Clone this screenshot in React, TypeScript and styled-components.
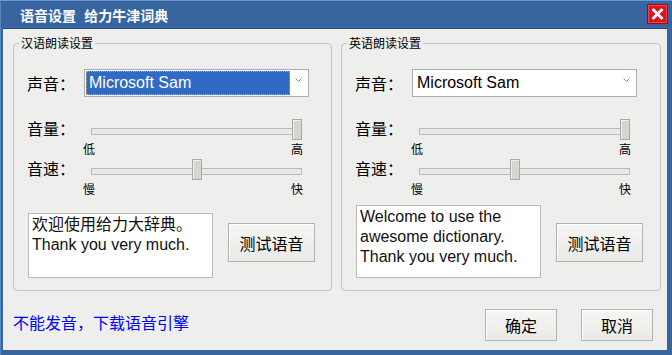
import React from 'react';
import styled, { createGlobalStyle } from 'styled-components';

const FONT = '"Liberation Sans", "Noto Sans CJK SC", sans-serif';

const GlobalStyle = createGlobalStyle`
  html, body {
    margin: 0;
    padding: 0;
    background: #ffffff;
  }
  body {
    font-family: ${FONT};
  }
  * {
    box-sizing: border-box;
  }
`;

interface VoiceGroupProps {
  title: string;
  highlighted?: boolean;
  speed: number;
  lines: string[];
  textHeight: number;
}

const Slider: React.FC<{ value: number }> = ({ value }) => (
  <Track>
    <Thumb $pos={value} />
  </Track>
);

const VoiceGroup: React.FC<VoiceGroupProps> = ({ title, highlighted, speed, lines, textHeight }) => (
  <Group>
    <Legend>{title}</Legend>
    <Row $height={28}>
      <Label>声音：</Label>
      <Select>
        <SelectValue $selected={highlighted}>Microsoft Sam</SelectValue>
        <Arrow>
          <svg width="7" height="4" viewBox="0 0 7 4">
            <polyline points="0.5,0.5 3.5,3.5 6.5,0.5" fill="none" stroke="#8a8a8a" strokeWidth="1" />
          </svg>
        </Arrow>
      </Select>
    </Row>
    <Row $height={21} $top={22}>
      <Label $lift>音量：</Label>
      <SliderBox>
        <Slider value={1} />
      </SliderBox>
    </Row>
    <Ticks>
      <span>低</span>
      <span>高</span>
    </Ticks>
    <Row $height={21} $top={3}>
      <Label $lift>音速：</Label>
      <SliderBox>
        <Slider value={speed} />
      </SliderBox>
    </Row>
    <Ticks>
      <span>慢</span>
      <span>快</span>
    </Ticks>
    <TestRow>
      <TextBox $height={textHeight}>
        {lines.map((l, i) => (
          <div key={i}>{l}</div>
        ))}
      </TextBox>
      <TestButton>测试语音</TestButton>
    </TestRow>
  </Group>
);

const App: React.FC = () => {
  return (
    <>
      <GlobalStyle />
      <Window>
        <TitleBar>
          <Title>语音设置 给力牛津词典</Title>
          <CloseButton>
            <svg width="13" height="12" viewBox="0 0 13 12">
              <line x1="1.5" y1="1" x2="11.5" y2="11" stroke="#fff" strokeWidth="2.8" />
              <line x1="11.5" y1="1" x2="1.5" y2="11" stroke="#fff" strokeWidth="2.8" />
            </svg>
          </CloseButton>
        </TitleBar>
        <Body>
          <Groups>
            <VoiceGroup
              title="汉语朗读设置"
              highlighted
              speed={0.5}
              textHeight={65}
              lines={['欢迎使用给力大辞典。', 'Thank you very much.']}
            />
            <VoiceGroup
              title="英语朗读设置"
              speed={0.455}
              textHeight={73}
              lines={['Welcome to use the', 'awesome dictionary.', 'Thank you very much.']}
            />
          </Groups>
          <Footer>
            <DownloadLink>不能发音，下载语音引擎</DownloadLink>
            <FooterButtons>
              <DialogButton>确定</DialogButton>
              <DialogButton>取消</DialogButton>
            </FooterButtons>
          </Footer>
        </Body>
      </Window>
    </>
  );
};

const Window = styled.div`
  width: 672px;
  height: 355px;
  background: #36659f;
  box-shadow: inset 0 1px 0 #6d96cc, inset 1px 0 0 #5a84bc;
  display: flex;
  flex-direction: column;
`;

const TitleBar = styled.div`
  height: 28px;
  flex: 0 0 28px;
  display: flex;
  align-items: center;
  justify-content: space-between;
  padding: 1px 4px 0 20px;
`;

const Title = styled.div`
  color: #ffffff;
  font-family: "Noto Sans CJK SC", sans-serif;
  font-size: 14px;
  font-weight: bold;
  line-height: 16px;
  word-spacing: 5px;
`;

const CloseButton = styled.div`
  width: 21px;
  height: 20px;
  background: #e0101c;
  border: 1px solid #9e0a12;
  box-shadow: inset 0 0 0 1px #f0464e;
  display: flex;
  align-items: center;
  justify-content: center;
  margin-top: -1px;
`;

const Body = styled.div`
  flex: 1;
  margin: 0 5px 5px 3px;
  background: #eeeeec;
  border-top: 1px solid #27507f;
  display: flex;
  flex-direction: column;
  padding: 14px 0 0 10px;
`;

const Groups = styled.div`
  display: grid;
  grid-template-columns: 319px 320px;
  column-gap: 9px;
`;

const Group = styled.div`
  position: relative;
  height: 248px;
  border: 1px solid #c4c4c2;
  border-radius: 4px;
  padding: 25px 0 12px 13px;
  display: flex;
  flex-direction: column;
`;

const Legend = styled.div`
  position: absolute;
  top: -8px;
  left: 5px;
  padding: 0 2px;
  background: #eeeeec;
  font-family: "Noto Sans CJK SC", sans-serif;
  font-size: 12px;
  line-height: 14px;
  color: #000;
`;

const Row = styled.div<{ $height: number; $top?: number }>`
  display: flex;
  align-items: center;
  height: ${p => p.$height}px;
  margin-top: ${p => p.$top ?? 0}px;
`;

const Label = styled.div<{ $lift?: boolean }>`
  width: 57px;
  flex: 0 0 57px;
  font-family: "Noto Sans CJK SC", sans-serif;
  font-size: 16px;
  line-height: 18px;
  color: #000;
  position: relative;
  top: ${p => (p.$lift ? '-2px' : '0')};
`;

const Select = styled.div`
  width: 225px;
  height: 28px;
  background: #ffffff;
  border: 1px solid #a9aeb4;
  display: flex;
  align-items: stretch;
  padding: 1px;
`;

const SelectValue = styled.div<{ $selected?: boolean }>`
  width: 204px;
  display: flex;
  align-items: center;
  padding-left: 3px;
  font-family: ${FONT};
  font-size: 16px;
  color: ${p => (p.$selected ? '#ffffff' : '#000000')};
  background: ${p => (p.$selected ? '#316ac5' : 'transparent')};
  outline: ${p => (p.$selected ? '1px dotted #d8a040' : 'none')};
  outline-offset: -1px;
`;

const Arrow = styled.div`
  flex: 1;
  display: flex;
  justify-content: center;
  padding-top: 7px;
`;

const SliderBox = styled.div`
  padding-left: 7px;
`;

const Track = styled.div`
  position: relative;
  width: 211px;
  height: 21px;

  &::before {
    content: '';
    position: absolute;
    left: 0;
    right: 0;
    top: 9px;
    height: 5px;
    border: 1px solid #b9b9b7;
    background: #e8e8e6;
  }
`;

const Thumb = styled.div<{ $pos: number }>`
  position: absolute;
  top: 0;
  left: calc(${p => p.$pos} * (100% - 10px));
  width: 10px;
  height: 21px;
  background: #d4d6d0;
  border: 1px solid #a8aaa6;
  box-shadow: inset 1px 1px 0 #eeeeec;
`;

const Ticks = styled.div`
  width: 220px;
  margin-left: 56px;
  margin-top: 2px;
  display: flex;
  justify-content: space-between;
  font-family: "Noto Sans CJK SC", sans-serif;
  font-size: 12px;
  line-height: 14px;
  color: #000;
`;

const TestRow = styled.div`
  margin-top: auto;
  display: flex;
  align-items: flex-end;
  gap: 15px;
  padding-left: 1px;
`;

const TextBox = styled.div<{ $height: number }>`
  width: 185px;
  height: ${p => p.$height}px;
  background: #ffffff;
  border: 1px solid #b9b9b7;
  padding: 1px 3px;
  font-family: ${FONT};
  font-size: 16px;
  line-height: 20px;
  color: #111;
  white-space: nowrap;
  overflow: hidden;
`;

const ButtonBase = styled.div`
  display: flex;
  align-items: center;
  justify-content: center;
  background: linear-gradient(#f6f6f4, #e9e9e6);
  border: 1px solid #b2b2b0;
  box-shadow: inset 1px 1px 0 #ffffff;
  font-family: "Noto Sans CJK SC", sans-serif;
  font-size: 16px;
  color: #000;
`;

const TestButton = styled(ButtonBase)`
  width: 87px;
  height: 39px;
  margin-bottom: 16px;
`;

const Footer = styled.div`
  flex: 1;
  display: flex;
  align-items: center;
  justify-content: space-between;
  padding: 8px 14px 0 0;
`;

const DownloadLink = styled.div`
  font-family: "Noto Sans CJK SC", sans-serif;
  font-size: 16px;
  line-height: 18px;
  color: #0000ff;
  cursor: pointer;
  margin-top: -6px;
`;

const FooterButtons = styled.div`
  display: flex;
  gap: 24px;
`;

const DialogButton = styled(ButtonBase)`
  width: 72px;
  height: 32px;
`;

export default App;
